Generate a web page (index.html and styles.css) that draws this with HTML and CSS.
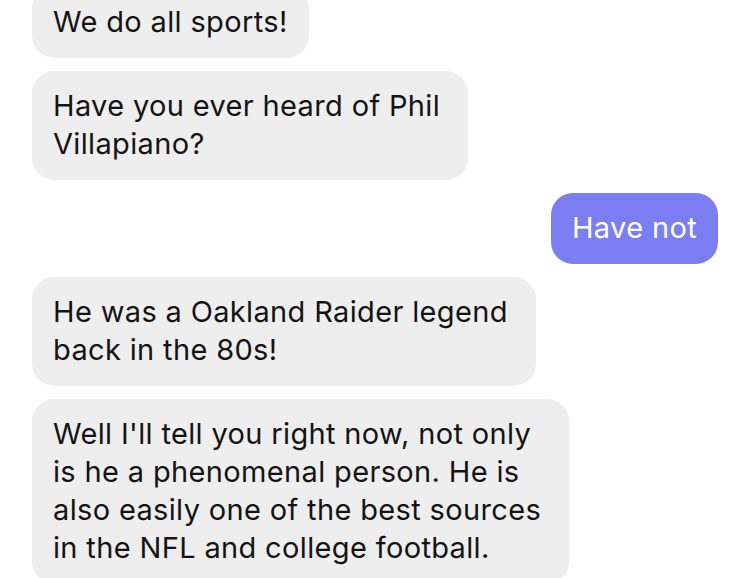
FILE: index.html
```html
<!DOCTYPE html>
<html>
<head>
<meta charset="utf-8">
<link rel="stylesheet" href="styles.css">
</head>
<body>
<div class="thread">
  <div class="msg in">We do all sports!</div>
  <div class="msg in multi">Have you ever heard of Phil<br>Villapiano?</div>
  <div class="msg out">Have not</div>
  <div class="msg in multi">He was a Oakland Raider legend<br>back in the 80s!</div>
  <div class="msg in multi">Well I'll tell you right now, not only<br>is he a phenomenal person. He is<br>also easily one of the best sources<br>in the NFL and college football.</div>
</div>
</body>
</html>
```
FILE: styles.css
```css
html, body {
  margin: 0;
  padding: 0;
  background: #ffffff;
  overflow: hidden;
}
body {
  width: 750px;
  height: 578px;
  font-family: Inter, "Noto Sans", sans-serif;
}
.thread {
  display: flex;
  flex-direction: column;
  gap: 13px;
  padding: 0 32px;
  margin-top: -13px;
}
.msg {
  width: max-content;
  padding: 16px 21px 17px;
  border-radius: 22px;
  font-size: 29px;
  line-height: 38px;
  letter-spacing: 0.35px;
}
.multi {
  padding-right: 28px;
}
.in {
  align-self: flex-start;
  background: #eeeeee;
  color: #141414;
}
.out {
  align-self: flex-end;
  background: #7b7ef0;
  color: #ffffff;
}
```
